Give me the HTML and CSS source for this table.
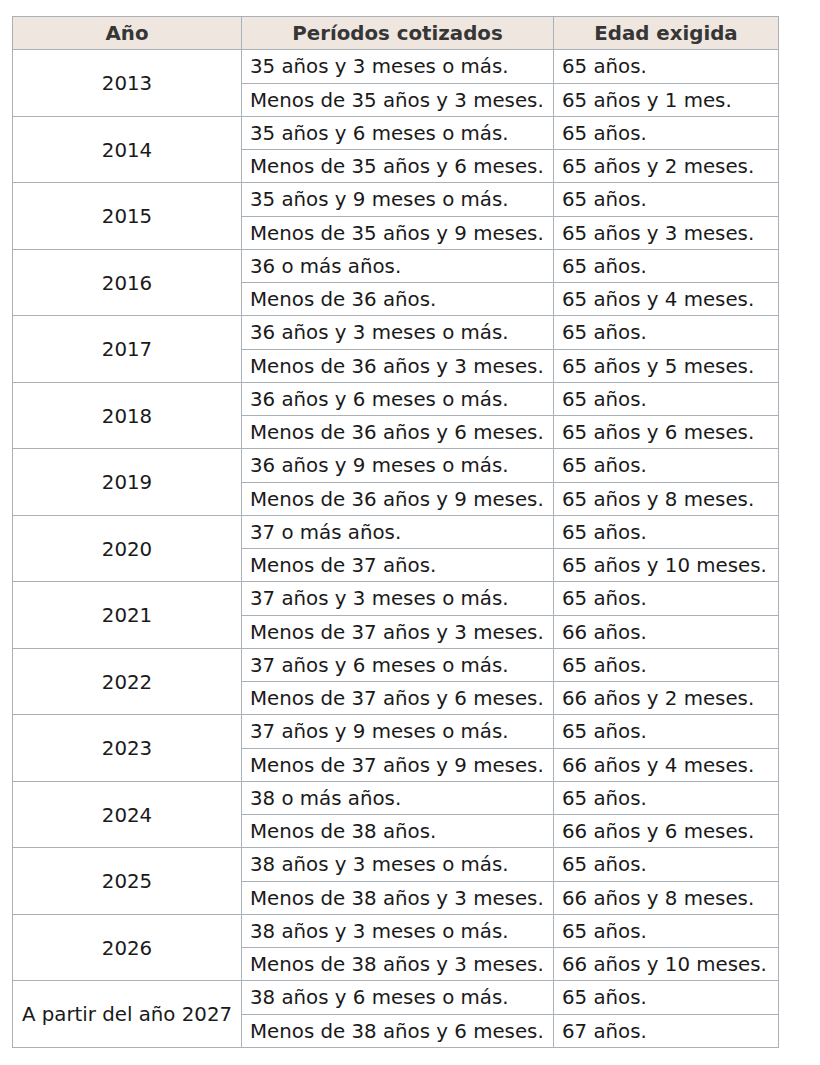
FILE: index.html
```html
<!DOCTYPE html>
<html lang="es">
<head>
<meta charset="utf-8">
<title>Edad de jubilación</title>
<link rel="stylesheet" href="styles.css">
</head>
<body>
<table class="tabla">
<colgroup><col class="c1"><col class="c2"><col class="c3"></colgroup>
<thead>
<tr><th>Año</th><th>Períodos cotizados</th><th>Edad exigida</th></tr>
</thead>
<tbody>
<tr><td class="anio" rowspan="2">2013</td><td>35 años y 3 meses o más.</td><td>65 años.</td></tr>
<tr><td>Menos de 35 años y 3 meses.</td><td>65 años y 1 mes.</td></tr>
<tr><td class="anio" rowspan="2">2014</td><td>35 años y 6 meses o más.</td><td>65 años.</td></tr>
<tr><td>Menos de 35 años y 6 meses.</td><td>65 años y 2 meses.</td></tr>
<tr><td class="anio" rowspan="2">2015</td><td>35 años y 9 meses o más.</td><td>65 años.</td></tr>
<tr><td>Menos de 35 años y 9 meses.</td><td>65 años y 3 meses.</td></tr>
<tr><td class="anio" rowspan="2">2016</td><td>36 o más años.</td><td>65 años.</td></tr>
<tr><td>Menos de 36 años.</td><td>65 años y 4 meses.</td></tr>
<tr><td class="anio" rowspan="2">2017</td><td>36 años y 3 meses o más.</td><td>65 años.</td></tr>
<tr><td>Menos de 36 años y 3 meses.</td><td>65 años y 5 meses.</td></tr>
<tr><td class="anio" rowspan="2">2018</td><td>36 años y 6 meses o más.</td><td>65 años.</td></tr>
<tr><td>Menos de 36 años y 6 meses.</td><td>65 años y 6 meses.</td></tr>
<tr><td class="anio" rowspan="2">2019</td><td>36 años y 9 meses o más.</td><td>65 años.</td></tr>
<tr><td>Menos de 36 años y 9 meses.</td><td>65 años y 8 meses.</td></tr>
<tr><td class="anio" rowspan="2">2020</td><td>37 o más años.</td><td>65 años.</td></tr>
<tr><td>Menos de 37 años.</td><td>65 años y 10 meses.</td></tr>
<tr><td class="anio" rowspan="2">2021</td><td>37 años y 3 meses o más.</td><td>65 años.</td></tr>
<tr><td>Menos de 37 años y 3 meses.</td><td>66 años.</td></tr>
<tr><td class="anio" rowspan="2">2022</td><td>37 años y 6 meses o más.</td><td>65 años.</td></tr>
<tr><td>Menos de 37 años y 6 meses.</td><td>66 años y 2 meses.</td></tr>
<tr><td class="anio" rowspan="2">2023</td><td>37 años y 9 meses o más.</td><td>65 años.</td></tr>
<tr><td>Menos de 37 años y 9 meses.</td><td>66 años y 4 meses.</td></tr>
<tr><td class="anio" rowspan="2">2024</td><td>38 o más años.</td><td>65 años.</td></tr>
<tr><td>Menos de 38 años.</td><td>66 años y 6 meses.</td></tr>
<tr><td class="anio" rowspan="2">2025</td><td>38 años y 3 meses o más.</td><td>65 años.</td></tr>
<tr><td>Menos de 38 años y 3 meses.</td><td>66 años y 8 meses.</td></tr>
<tr><td class="anio" rowspan="2">2026</td><td>38 años y 3 meses o más.</td><td>65 años.</td></tr>
<tr><td>Menos de 38 años y 3 meses.</td><td>66 años y 10 meses.</td></tr>
<tr><td class="anio" rowspan="2">A partir del año 2027</td><td>38 años y 6 meses o más.</td><td>65 años.</td></tr>
<tr><td>Menos de 38 años y 6 meses.</td><td>67 años.</td></tr>
</tbody>
</table>
</body>
</html>
```
FILE: styles.css
```css
html, body {
  margin: 0;
  padding: 0;
  background: #ffffff;
}
body {
  padding: 16px 0 0 12px;
  font-family: "DejaVu Sans", Verdana, sans-serif;
  color: #1a1a1a;
}
.tabla {
  border-collapse: collapse;
  width: 766px;
  table-layout: fixed;
  font-size: 19.8px;
}
.c1 { width: 229px; }
.c2 { width: 312px; }
.c3 { width: 225px; }
.tabla tr {
  height: 33.26px;
}
.tabla th,
.tabla td {
  border: 1px solid #a9b0b8;
  padding: 2px 8px 0;
  line-height: 22px;
  white-space: nowrap;
  text-align: left;
  vertical-align: middle;
}
.tabla th {
  background: #efe7df;
  color: #363636;
  font-weight: bold;
  text-align: center;
}
.tabla td.anio {
  text-align: center;
}
```
